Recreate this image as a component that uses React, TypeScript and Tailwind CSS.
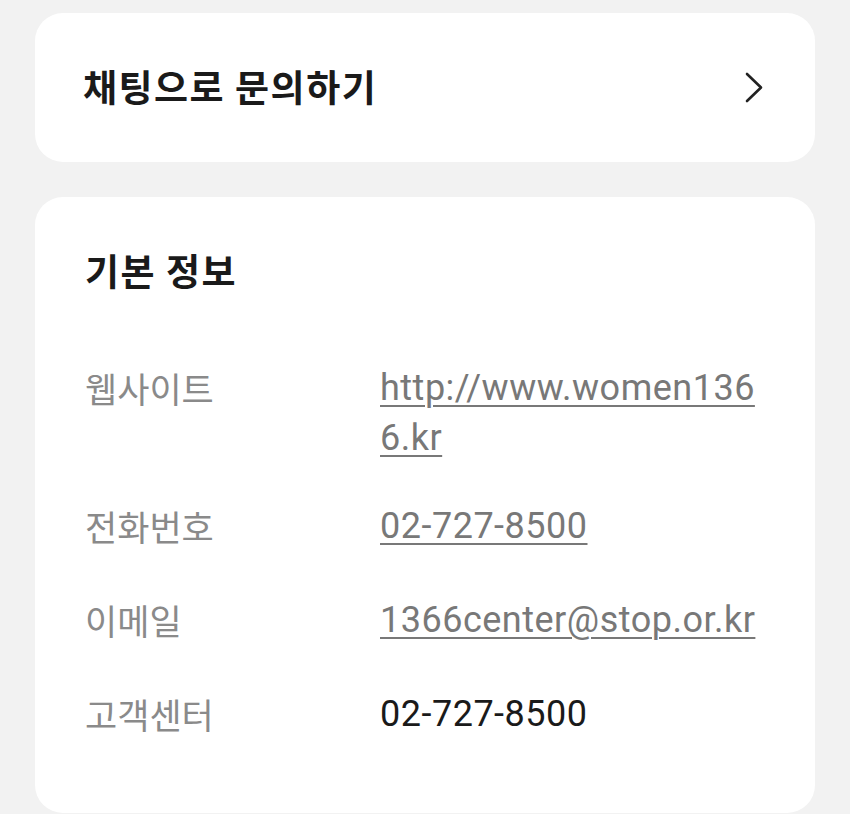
import React from "react";

const font = "font-['Roboto','Noto_Sans_CJK_KR',sans-serif]";

const rows = [
  { label: "웹사이트", value: "http://www.women1366.kr", link: true },
  { label: "전화번호", value: "02-727-8500", link: true },
  { label: "이메일", value: "1366center@stop.or.kr", link: true },
  { label: "고객센터", value: "02-727-8500", link: false },
];

export default function App() {
  return (
    <div className={`min-h-[814px] bg-[#f2f2f2] px-[35px] pt-[13px] ${font}`}>
      <div className="flex flex-col gap-[35px]">
        <div className="flex h-[149px] items-center justify-between rounded-[28px] bg-white pl-[48px] pr-[52px]">
          <span className="-mt-[4px] text-[37px] font-bold leading-[50px] tracking-[1.5px] text-[#1a1a1a] font-['Noto_Sans_CJK_KR',sans-serif]">
            채팅으로 문의하기
          </span>
          <svg width="18" height="31" viewBox="0 0 18 31" fill="none">
            <path d="M2 2 L16 15.5 L2 29" stroke="#222" strokeWidth="2.6" strokeLinecap="round" strokeLinejoin="round" />
          </svg>
        </div>

        <div className="h-[616px] rounded-[28px] bg-white pl-[50px] pr-[50px] pt-[48px]">
          <h2 className="text-[37px] font-bold leading-[50px] tracking-[1.5px] text-[#1a1a1a] font-['Noto_Sans_CJK_KR',sans-serif]">
            기본 정보
          </h2>
          <div className="mt-[68px] flex flex-col">
            {rows.map((r, i) => (
              <div key={r.label} className={`grid grid-cols-[295px_1fr] ${i > 0 ? (i === 1 ? "mt-[38px]" : "mt-[44px]") : ""}`}>
                <span className="text-[35px] leading-[50px] text-[#8a8a8a] font-['Noto_Sans_CJK_KR',sans-serif]">
                  {r.label}
                </span>
                <span
                  className={`break-all text-[36px] leading-[50px] tracking-[0.5px] ${
                    r.link
                      ? "text-[#787878] underline decoration-[2px] underline-offset-[5px]"
                      : "text-[#1a1a1a]"
                  }`}
                >
                  {r.value}
                </span>
              </div>
            ))}
          </div>
        </div>
      </div>
    </div>
  );
}
